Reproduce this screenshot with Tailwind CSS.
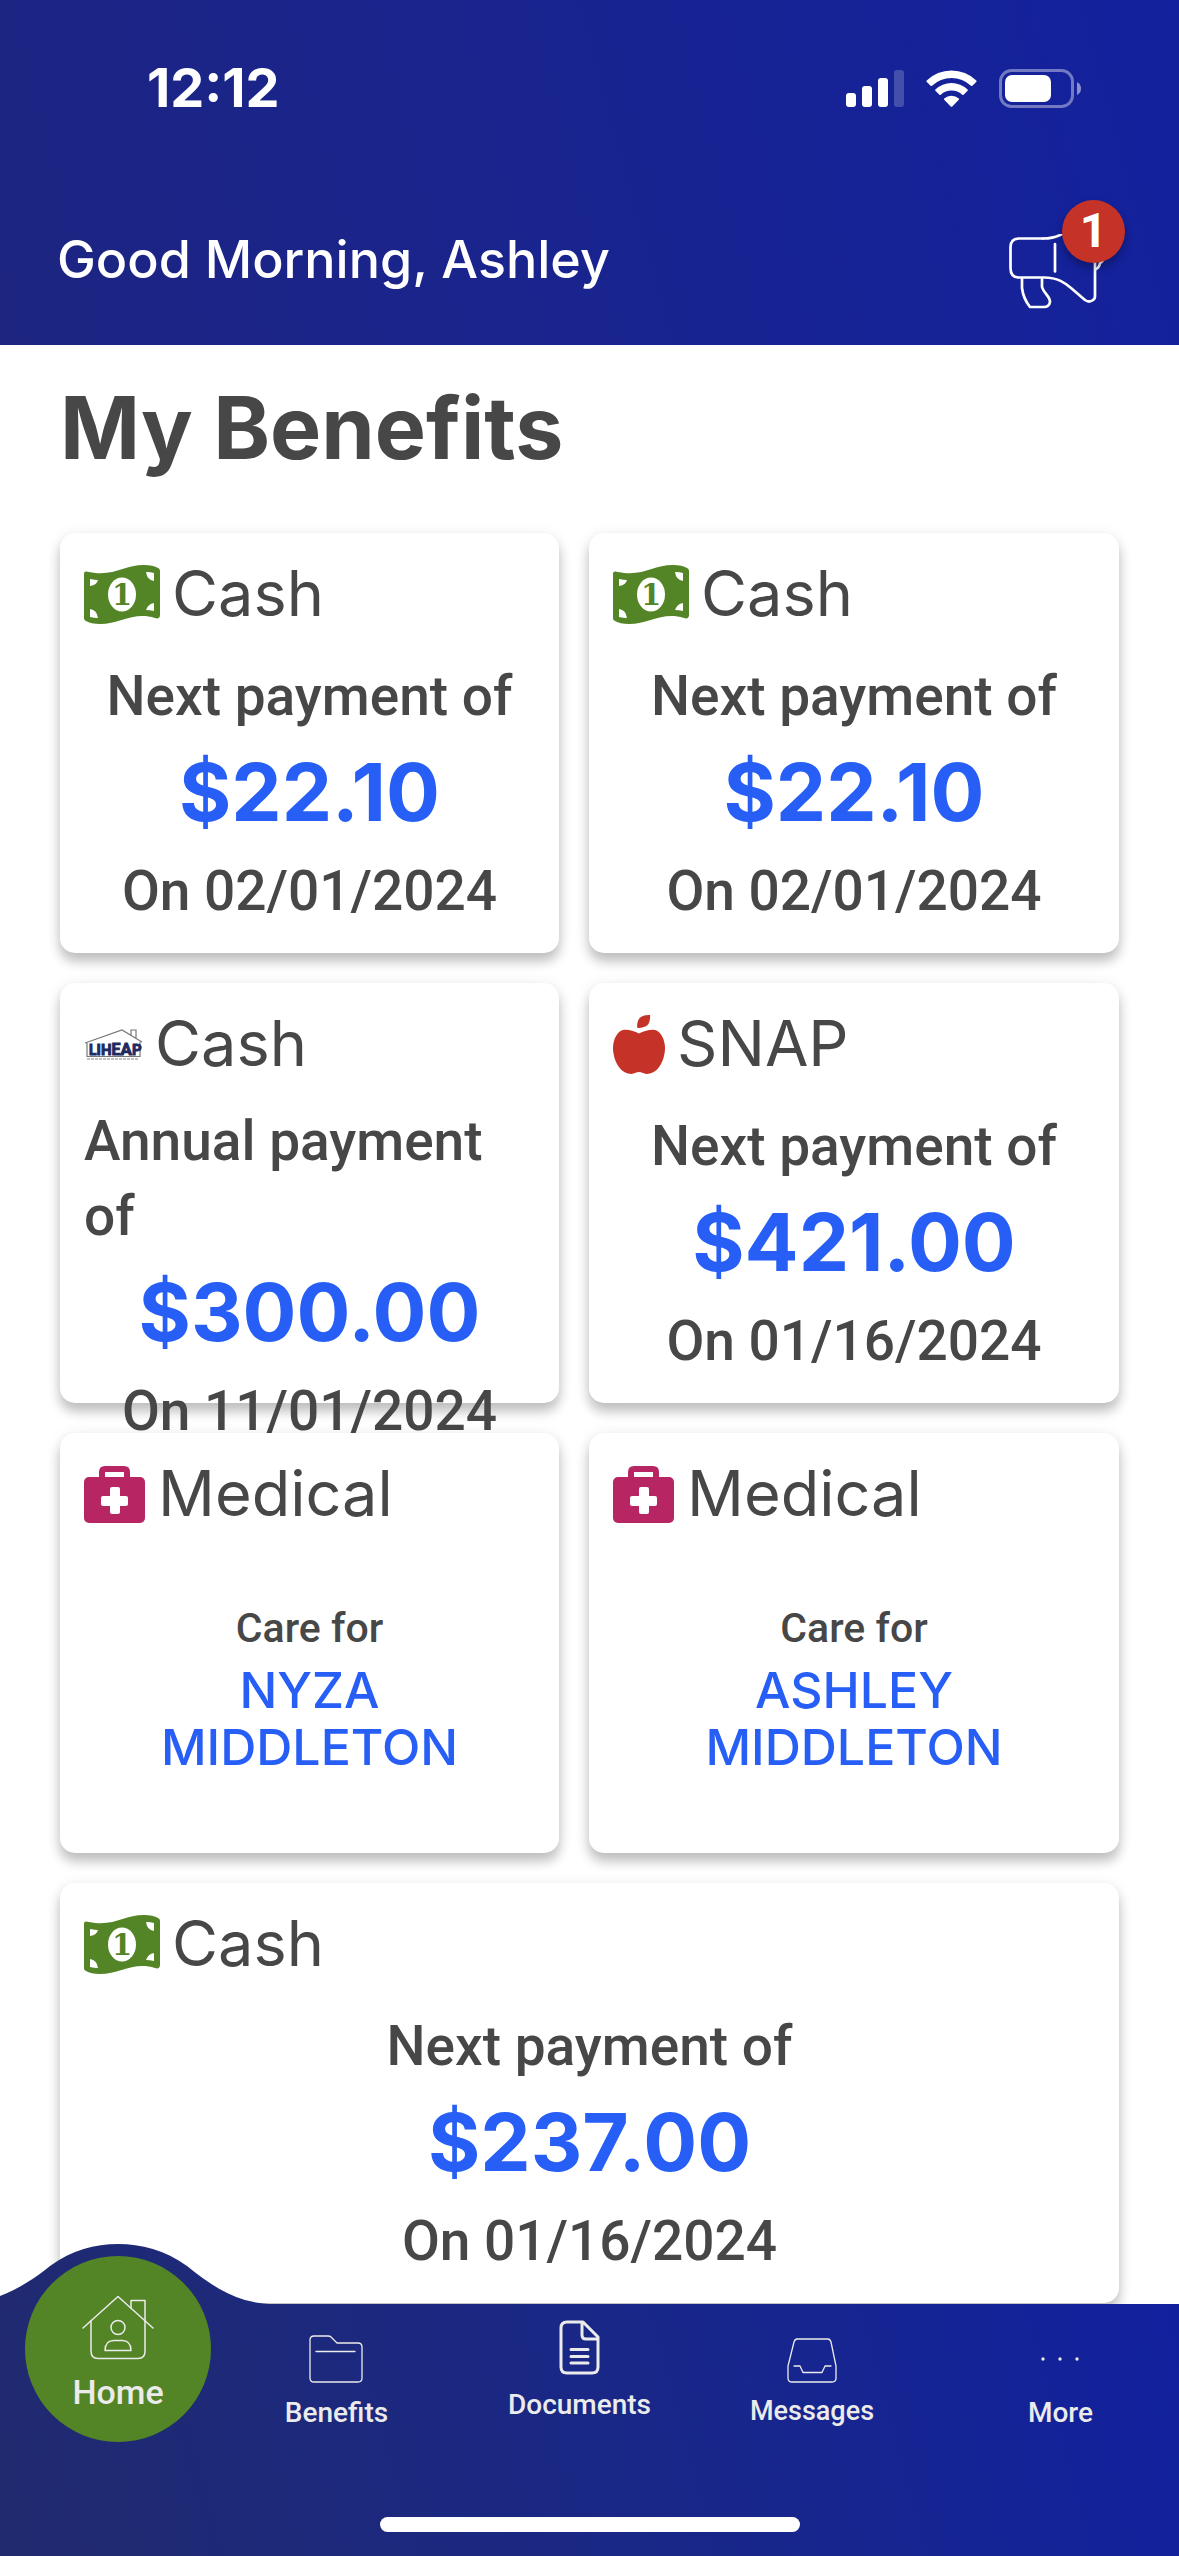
<!DOCTYPE html>
<html lang="en">
<head>
    <meta charset="UTF-8">
    <meta name="viewport" content="width=device-width, initial-scale=1.0">
    <title>My Benefits</title>
    <script src="https://cdn.jsdelivr.net/npm/@tailwindcss/browser@4"></script>
</head>
<body class="min-h-screen bg-white text-[#474747] font-['Roboto',sans-serif]">

    <!-- Shared icons -->
    <svg class="hidden" aria-hidden="true">
        <symbol id="icon-cash" viewBox="0 0 76 59">
            <path fill="#538426" d="M0 9C0 6 2 6 5 7C30 12 40 0 60 0C66 0 71 1 74 3C76 4 76 5 76 7V50C76 53 74 54 71 53C50 46 36 59 16 59C10 59 5 58 2 56C0 55 0 54 0 52Z"/>
            <path fill="#fff" d="M6 14Q11 15 14 15Q13 20 6 21ZM62 7Q67 7 70 8V16Q63 15 62 7ZM6 44Q13 45 14 53Q10 53 6 52ZM70 38V46Q66 45 62 45Q64 39 70 38Z"/>
            <ellipse cx="38" cy="29.500" rx="14" ry="17" fill="#fff"/>
            <text x="38" y="40" text-anchor="middle" font-family="DejaVu Serif, serif" font-weight="700" font-size="29" fill="#538426">1</text>
        </symbol>
        <symbol id="icon-medical" viewBox="0 0 62 57">
            <path fill="none" stroke="#b72663" stroke-width="6" d="M18 14V6Q18 3 21 3H40Q43 3 43 6V14"/>
            <rect y="11" width="61" height="46" rx="5" fill="#b72663"/>
            <rect x="17" y="30" width="27" height="10" rx="2" fill="#fff"/>
            <rect x="26" y="21" width="10" height="27" rx="2" fill="#fff"/>
        </symbol>
    </svg>

    <header class="bg-linear-75 from-[#1d2581] to-[#13219e] text-white pb-[29px]">
        <!-- Status bar -->
        <div class="flex items-center justify-between pt-[62px] pl-[147px] pr-[98px]">
            <time class="font-['Inter',sans-serif] font-bold text-[54px] leading-[52px]">12:12</time>
            <div class="flex items-center gap-[22px]">
                <svg class="w-[58px] h-[37px]" viewBox="0 0 58 37" fill="#fff">
                    <rect y="23" width="10" height="14" rx="3"/>
                    <rect x="16" y="16" width="10" height="21" rx="3"/>
                    <rect x="32" y="8" width="10" height="29" rx="3"/>
                    <rect x="48" width="10" height="37" rx="3" opacity=".2"/>
                </svg>
                <svg class="w-[51px] h-[37px]" viewBox="0 0 51 37" fill="#fff">
                    <path d="M.700 10.500A35.500 35.500 0 0 1 50.300 10.500Q50.800 11.200 50.200 11.900L46.400 15.700Q45.700 16.200 45 15.700A28.500 28.500 0 0 0 6 15.700Q5.300 16.200 4.600 15.700L.800 11.900Q.200 11.200.700 10.500Z"/>
                    <path d="M9.400 19.400A23.500 23.500 0 0 1 41.600 19.400Q42.200 20.100 41.600 20.800L37.600 24.700Q36.900 25.300 36.200 24.700A16 16 0 0 0 14.800 24.700Q14.100 25.300 13.400 24.700L9.400 20.800Q8.800 20.100 9.400 19.400Z"/>
                    <path d="M18.200 28.400A11 11 0 0 1 32.800 28.400Q33.500 29.100 32.800 29.800L26.300 36.400Q25.500 37.100 24.700 36.400L18.200 29.800Q17.500 29.100 18.200 28.400Z"/>
                </svg>
                <svg class="w-[82px] h-[39px]" viewBox="0 0 82 39" fill="#fff">
                    <rect x="1.500" y="1.500" width="72" height="36" rx="11" fill="none" stroke="#fff" stroke-width="3" opacity=".4"/>
                    <rect x="6" y="6" width="46" height="27" rx="7"/>
                    <path d="M78 13Q82 15 82 19.500Q82 24 78 26Z" opacity=".5"/>
                </svg>
            </div>
        </div>

        <div class="mt-[82px] pl-[57px] pr-[54px] flex items-center justify-between">
            <p class="pt-2 font-['Inter',sans-serif] font-medium text-[52px] leading-[112px]">Good Morning, Ashley</p>
            <button type="button" aria-label="Notifications" class="relative w-[117px] h-[112px]">
                <svg class="absolute left-0 bottom-0 w-[100px] h-[78px]" viewBox="0 0 100 78" fill="none" stroke="#fff" stroke-width="2.700" stroke-linecap="round" stroke-linejoin="round">
                    <path d="M35 4.500H11Q2.500 4.500 2.500 13V34Q2.500 43.500 11 43.500H36C50 43.500 57 49 63 54L77 66Q81 69 85 66Q87 65 87 62V-20"/>
                    <path d="M35 4.500Q46 4.500 54 0L70 -10"/>
                    <path d="M47 10V37.500"/>
                    <path d="M14 45V54C15 62 18 68 22 73H36Q41 73 42 68C42 62 36 60 34 53V45"/>
                    <path d="M88 35Q91 34 92 29Q95 28 96 22"/>
                </svg>
                <span class="absolute right-0 top-0 size-[63px] rounded-full bg-[#c53228] shadow-[0_5px_8px_rgba(0,0,0,0.3)] text-center font-bold text-[48px] leading-[62px]">1</span>
            </button>
        </div>
    </header>

    <main class="px-[60px] pt-[32px] pb-[253px]">
        <h1 class="font-['Inter',sans-serif] font-bold text-[86px] leading-[102px]">My Benefits</h1>

        <div class="mt-[54px] grid grid-cols-[499fr_530fr] gap-[30px]">

            <section class="relative h-[420px] rounded-[15px] bg-white px-6 pt-6 shadow-[0_3px_15px_rgba(0,0,0,0.1),0_9px_12px_rgba(0,0,0,0.2)]">
                <h2 class="flex h-[75px] items-center gap-3 font-['Inter',sans-serif] text-[63px] leading-[70px]">
                    <svg class="w-[76px] h-[59px]"><use href="#icon-cash"/></svg>
                    <span class="pb-1">Cash</span>
                </h2>
                <div class="mt-[27px] flex flex-col items-center">
                    <p class="font-medium text-[55px] leading-[75px]">Next payment of</p>
                    <p class="mb-1 font-['Inter',sans-serif] font-bold text-[80px] leading-[116px] text-[#265ef6]">$22.10</p>
                    <p class="font-medium text-[55px] leading-[75px]">On 02/01/2024</p>
                </div>
            </section>

            <section class="relative h-[420px] rounded-[15px] bg-white px-6 pt-6 shadow-[0_3px_15px_rgba(0,0,0,0.1),0_9px_12px_rgba(0,0,0,0.2)]">
                <h2 class="flex h-[75px] items-center gap-3 font-['Inter',sans-serif] text-[63px] leading-[70px]">
                    <svg class="w-[76px] h-[59px]"><use href="#icon-cash"/></svg>
                    <span class="pb-1">Cash</span>
                </h2>
                <div class="mt-[27px] flex flex-col items-center">
                    <p class="font-medium text-[55px] leading-[75px]">Next payment of</p>
                    <p class="mb-1 font-['Inter',sans-serif] font-bold text-[80px] leading-[116px] text-[#265ef6]">$22.10</p>
                    <p class="font-medium text-[55px] leading-[75px]">On 02/01/2024</p>
                </div>
            </section>

            <section class="relative h-[420px] rounded-[15px] bg-white px-6 pt-6 shadow-[0_3px_15px_rgba(0,0,0,0.1),0_9px_12px_rgba(0,0,0,0.2)]">
                <h2 class="flex h-[75px] items-center gap-3 font-['Inter',sans-serif] text-[63px] leading-[70px]">
                    <svg class="w-[59px] h-[32px]" viewBox="0 0 59 32">
                        <path fill="none" stroke="#777" stroke-width="1.200" d="M1 14L38 1L58 13M47 6V1H52V9M3 14V27.500H56V13"/>
                        <text x="5" y="25.500" fill="#20295f" stroke="#20295f" stroke-width=".900" font-family="Roboto, sans-serif" font-weight="700"><tspan font-size="14">L</tspan><tspan font-size="15">IH</tspan><tspan font-size="16">E</tspan><tspan font-size="17">A</tspan><tspan font-size="15">P</tspan></text>
                        <path stroke="#aaa" stroke-width="1.500" stroke-dasharray="3 1" d="M3 30H55"/>
                    </svg>
                    <span class="pb-1">Cash</span>
                </h2>
                <div class="mt-[22px] flex flex-col items-center">
                    <p class="font-medium text-[55px] leading-[75px]">Annual payment of</p>
                    <p class="mb-1 font-['Inter',sans-serif] font-bold text-[80px] leading-[116px] text-[#265ef6]">$300.00</p>
                    <p class="font-medium text-[55px] leading-[75px]">On 11/01/2024</p>
                </div>
            </section>

            <section class="relative h-[420px] rounded-[15px] bg-white px-6 pt-6 shadow-[0_3px_15px_rgba(0,0,0,0.1),0_9px_12px_rgba(0,0,0,0.2)]">
                <h2 class="flex h-[75px] items-center gap-3 font-['Inter',sans-serif] text-[63px] leading-[70px]">
                    <svg class="w-[52px] h-[59px]" viewBox="0 0 448 512" fill="#c53228" preserveAspectRatio="none">
                        <path d="M350.85 129c25.97 4.67 47.27 18.67 63.92 42 14.65 20.67 24.64 46.67 29.96 78 4.67 28.67 4.32 57.33-1 86-7.99 47.33-23.97 87-47.94 119-28.64 38.67-64.59 58-107.87 58-10.66 0-22.3-3.33-34.96-10-8.66-5.33-18.31-8-28.97-8s-20.3 2.67-28.97 8c-12.66 6.67-24.3 10-34.96 10-43.28 0-79.23-19.33-107.87-58-23.97-32-39.95-71.67-47.94-119-5.32-28.67-5.67-57.33-1-86 5.32-31.33 15.31-57.33 29.96-78 16.65-23.33 37.95-37.33 63.92-42 15.98-2.67 37.95-.33 65.92 7 23.97 6.67 44.28 14.67 60.93 24 16.65-9.33 36.96-17.33 60.93-24 27.98-7.33 49.96-9.67 65.94-7zm-54.94-41c-9.32 8.67-21.65 15-36.96 19-10.66 3.33-22.3 5-34.96 5l-14.98-1c-1.33-9.33-1.33-20 0-32 2.67-24 10.32-42.33 22.97-55 9.32-8.67 21.65-15 36.96-19 10.66-3.33 22.3-5 34.96-5l14.98 1 1 15c0 12.67-1.67 24.33-4.99 35-3.99 15.33-10.31 27.67-18.98 37z"/>
                    </svg>
                    <span class="pb-1">SNAP</span>
                </h2>
                <div class="mt-[27px] flex flex-col items-center">
                    <p class="font-medium text-[55px] leading-[75px]">Next payment of</p>
                    <p class="mb-1 font-['Inter',sans-serif] font-bold text-[80px] leading-[116px] text-[#265ef6]">$421.00</p>
                    <p class="font-medium text-[55px] leading-[75px]">On 01/16/2024</p>
                </div>
            </section>

            <section class="relative h-[420px] rounded-[15px] bg-white px-6 pt-6 shadow-[0_3px_15px_rgba(0,0,0,0.1),0_9px_12px_rgba(0,0,0,0.2)]">
                <h2 class="flex h-[75px] items-center gap-3 font-['Inter',sans-serif] text-[63px] leading-[70px]">
                    <svg class="w-[62px] h-[57px]"><use href="#icon-medical"/></svg>
                    <span class="pb-1">Medical</span>
                </h2>
                <div class="mt-[68px] text-center">
                    <p class="font-medium text-[41px] leading-[56px]">Care for</p>
                    <p class="mt-[6px] font-['Inter',sans-serif] font-medium text-[50px] leading-[57px] text-[#265ef6]">NYZA<br>MIDDLETON</p>
                </div>
            </section>

            <section class="relative h-[420px] rounded-[15px] bg-white px-6 pt-6 shadow-[0_3px_15px_rgba(0,0,0,0.1),0_9px_12px_rgba(0,0,0,0.2)]">
                <h2 class="flex h-[75px] items-center gap-3 font-['Inter',sans-serif] text-[63px] leading-[70px]">
                    <svg class="w-[62px] h-[57px]"><use href="#icon-medical"/></svg>
                    <span class="pb-1">Medical</span>
                </h2>
                <div class="mt-[68px] text-center">
                    <p class="font-medium text-[41px] leading-[56px]">Care for</p>
                    <p class="mt-[6px] font-['Inter',sans-serif] font-medium text-[50px] leading-[57px] text-[#265ef6]">ASHLEY<br>MIDDLETON</p>
                </div>
            </section>

            <section class="relative col-span-2 h-[420px] rounded-[15px] bg-white px-6 pt-6 shadow-[0_3px_15px_rgba(0,0,0,0.1),0_9px_12px_rgba(0,0,0,0.2)]">
                <h2 class="flex h-[75px] items-center gap-3 font-['Inter',sans-serif] text-[63px] leading-[70px]">
                    <svg class="w-[76px] h-[59px]"><use href="#icon-cash"/></svg>
                    <span class="pb-1">Cash</span>
                </h2>
                <div class="mt-[27px] flex flex-col items-center">
                    <p class="font-medium text-[55px] leading-[75px]">Next payment of</p>
                    <p class="mb-1 font-['Inter',sans-serif] font-bold text-[80px] leading-[116px] text-[#265ef6]">$237.00</p>
                    <p class="font-medium text-[55px] leading-[75px]">On 01/16/2024</p>
                </div>
            </section>
        </div>
    </main>

    <!-- Tab bar, its top edge rises around the active tab -->
    <nav class="fixed inset-x-0 bottom-0 bg-linear-75 from-[#212a6e] to-[#12209f] text-[#ebebeb] font-medium [clip-path:path('M0_52C20_44_35_34_50_22C72_6_95_0_118_0C141_0_165_6_187_22C215_45_240_60_275_60H4000V2000H0Z')]">
        <div class="grid grid-cols-[236fr_201fr_285fr_180fr_277fr] pt-3">
            <a href="#home" aria-current="page" class="mx-auto flex size-[186px] flex-col items-center rounded-full bg-[#538426] pt-[39px] text-[34px] leading-[40px]">
                <svg class="mb-3 w-[74px] h-[65px]" viewBox="0 0 74 65" fill="none" stroke="#ebebeb" stroke-width="1.500" stroke-linecap="round" stroke-linejoin="round">
                    <path d="M2 33L37 1.500L72 33"/>
                    <path d="M10 26V56Q10 63.500 17 63.500H57Q64 63.500 64 56V5.500H50V13"/>
                    <circle cx="37" cy="32.500" r="7"/>
                    <path d="M24 55.500Q24 45.500 33 45.500H41Q50 45.500 50 55.500Z"/>
                </svg>
                Home
            </a>
            <a href="#benefits" class="mx-auto flex flex-col items-center pt-[79px] text-[28px] leading-[32px]">
                <svg class="mb-[14px] w-[54px] h-[48px]" viewBox="0 0 54 48" fill="none" stroke="#ebebeb" stroke-width="1.300" stroke-linecap="round" stroke-linejoin="round">
                    <path d="M1 5Q1 1 5 1H19Q21 1 22 2L28 8H49Q53 8 53 12V43Q53 47 49 47H5Q1 47 1 43ZM7 16.500H46"/>
                </svg>
                Benefits
            </a>
            <a href="#documents" class="mx-auto flex flex-col items-center pt-[64px] text-[28px] leading-[32px]">
                <svg class="mb-[14px] w-[41px] h-[55px]" viewBox="0 0 41 55" fill="none" stroke="#ebebeb" stroke-width="3" stroke-linecap="round" stroke-linejoin="round">
                    <path d="M8 2H24L39 17V47Q39 53 33 53H8Q2 53 2 47V8Q2 2 8 2ZM23 2V15Q23 19 27 19H38"/>
                    <path d="M12 29.500H29M12 36.500H29M12 43H29"/>
                </svg>
                Documents
            </a>
            <a href="#messages" class="mx-auto flex flex-col items-center pt-[82px] text-[27px] leading-[32px]">
                <svg class="mb-3 w-[50px] h-[45px]" viewBox="0 0 50 45" fill="none" stroke="#ebebeb" stroke-width="1.300" stroke-linecap="round" stroke-linejoin="round">
                    <path d="M10 1H41Q43 1 44 4L49 28V40Q49 44 45 44H5Q1 44 1 40V28L7 4Q8 1 10 1Z"/>
                    <path d="M7 28H13L16 34.500H35L38 28H44"/>
                </svg>
                Messages
            </a>
            <a href="#more" class="mx-auto flex flex-col items-center pt-[79px] pl-[40px] text-[28px] leading-[32px]">
                <svg class="mb-[14px] w-[54px] h-[48px]" viewBox="0 0 54 48" fill="#ebebeb">
                    <circle cx="10" cy="24" r="1.700"/>
                    <circle cx="27" cy="24" r="1.700"/>
                    <circle cx="44" cy="24" r="1.700"/>
                </svg>
                More
            </a>
        </div>
        <div class="mx-auto mt-[75px] mb-6 h-[15px] w-[420px] rounded-full bg-white"></div>
    </nav>
</body>
</html>
